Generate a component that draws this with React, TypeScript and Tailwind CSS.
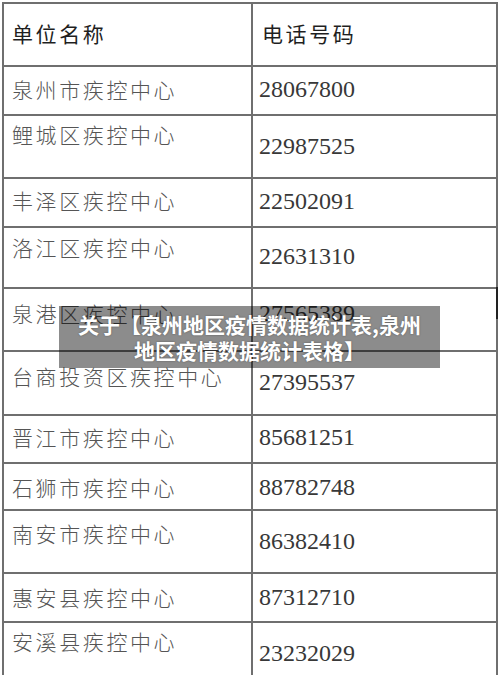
const cn = '"Noto Sans CJK SC", "Noto Sans", sans-serif';
const num = '"Liberation Serif", "Times New Roman", serif';

type Row = {
  name: string;
  phone: string;
  h: string;
  namePt: string;
  phonePt: string;
};

const rows: Row[] = [
  { name: "泉州市疾控中心", phone: "28067800", h: "h-[49px]", namePt: "pt-[8px]", phonePt: "pt-[8px]" },
  { name: "鲤城区疾控中心", phone: "22987525", h: "h-[63px]", namePt: "pt-[4px]", phonePt: "pt-[16px]" },
  { name: "丰泽区疾控中心", phone: "22502091", h: "h-[49px]", namePt: "pt-[7px]", phonePt: "pt-[8px]" },
  { name: "洛江区疾控中心", phone: "22631310", h: "h-[61px]", namePt: "pt-[5px]", phonePt: "pt-[14px]" },
  { name: "泉港区疾控中心", phone: "27565389", h: "h-[63px]", namePt: "pt-[10px]", phonePt: "pt-[10px]" },
  { name: "台商投资区疾控中心", phone: "27395537", h: "h-[64px]", namePt: "pt-[10px]", phonePt: "pt-[16px]" },
  { name: "晋江市疾控中心", phone: "85681251", h: "h-[48px]", namePt: "pt-[7px]", phonePt: "pt-[7px]" },
  { name: "石狮市疾控中心", phone: "88782748", h: "h-[47px]", namePt: "pt-[9px]", phonePt: "pt-[9px]" },
  { name: "南安市疾控中心", phone: "86382410", h: "h-[63px]", namePt: "pt-[8px]", phonePt: "pt-[16px]" },
  { name: "惠安县疾控中心", phone: "87312710", h: "h-[49px]", namePt: "pt-[9px]", phonePt: "pt-[9px]" },
  { name: "安溪县疾控中心", phone: "23232029", h: "h-[60px]", namePt: "pt-[4px]", phonePt: "pt-[16px]" },
];

export default function App() {
  return (
    <div className="relative w-[500px] h-[675px] overflow-hidden bg-white">
      <div className="ml-[2px] mt-[2px] w-[496px] border-x-2 border-[#6f6f6f]">
        {/* header */}
        <div className="grid grid-cols-[247px_1fr] h-[63px] border-t-2 border-[#6f6f6f]">
          <div
            className="pt-[15px] pl-[8px] text-[21px] leading-[28px] tracking-[2.6px] text-[#1f1f1f]"
            style={{ fontFamily: cn }}
          >
            单位名称
          </div>
          <div
            className="pt-[15px] pl-[9px] border-l-2 border-[#6f6f6f] text-[21px] leading-[28px] tracking-[2.6px] text-[#1f1f1f]"
            style={{ fontFamily: cn }}
          >
            电话号码
          </div>
        </div>

        {rows.map((r) => (
          <div
            key={r.name}
            className={`grid grid-cols-[247px_1fr] border-t-2 border-[#6f6f6f] ${r.h}`}
          >
            <div
              className={`${r.namePt} pl-[8px] text-[21px] leading-[28px] tracking-[2.6px] text-[#555] font-light whitespace-nowrap`}
              style={{ fontFamily: cn }}
            >
              {r.name}
            </div>
            <div
              className={`${r.phonePt} pl-[6px] border-l-2 border-[#6f6f6f] text-[24px] leading-[28px] text-[#383838]`}
              style={{ fontFamily: num }}
            >
              {r.phone}
            </div>
          </div>
        ))}
      </div>

      {/* dark mark on the right border */}
      <div className="absolute left-[496px] top-[287px] w-[2px] h-[32px] bg-[#222]" />

      {/* title banner */}
      <div
        className="absolute left-[59px] top-[306px] w-[381px] h-[62px] bg-black/45 flex flex-col items-center justify-center text-white font-bold text-[21px] leading-[26px] [text-shadow:0_0_2px_rgba(0,0,0,0.4)]"
        style={{ fontFamily: cn }}
      >
        <div>关于【泉州地区疫情数据统计表,泉州</div>
        <div>地区疫情数据统计表格】</div>
      </div>
    </div>
  );
}
